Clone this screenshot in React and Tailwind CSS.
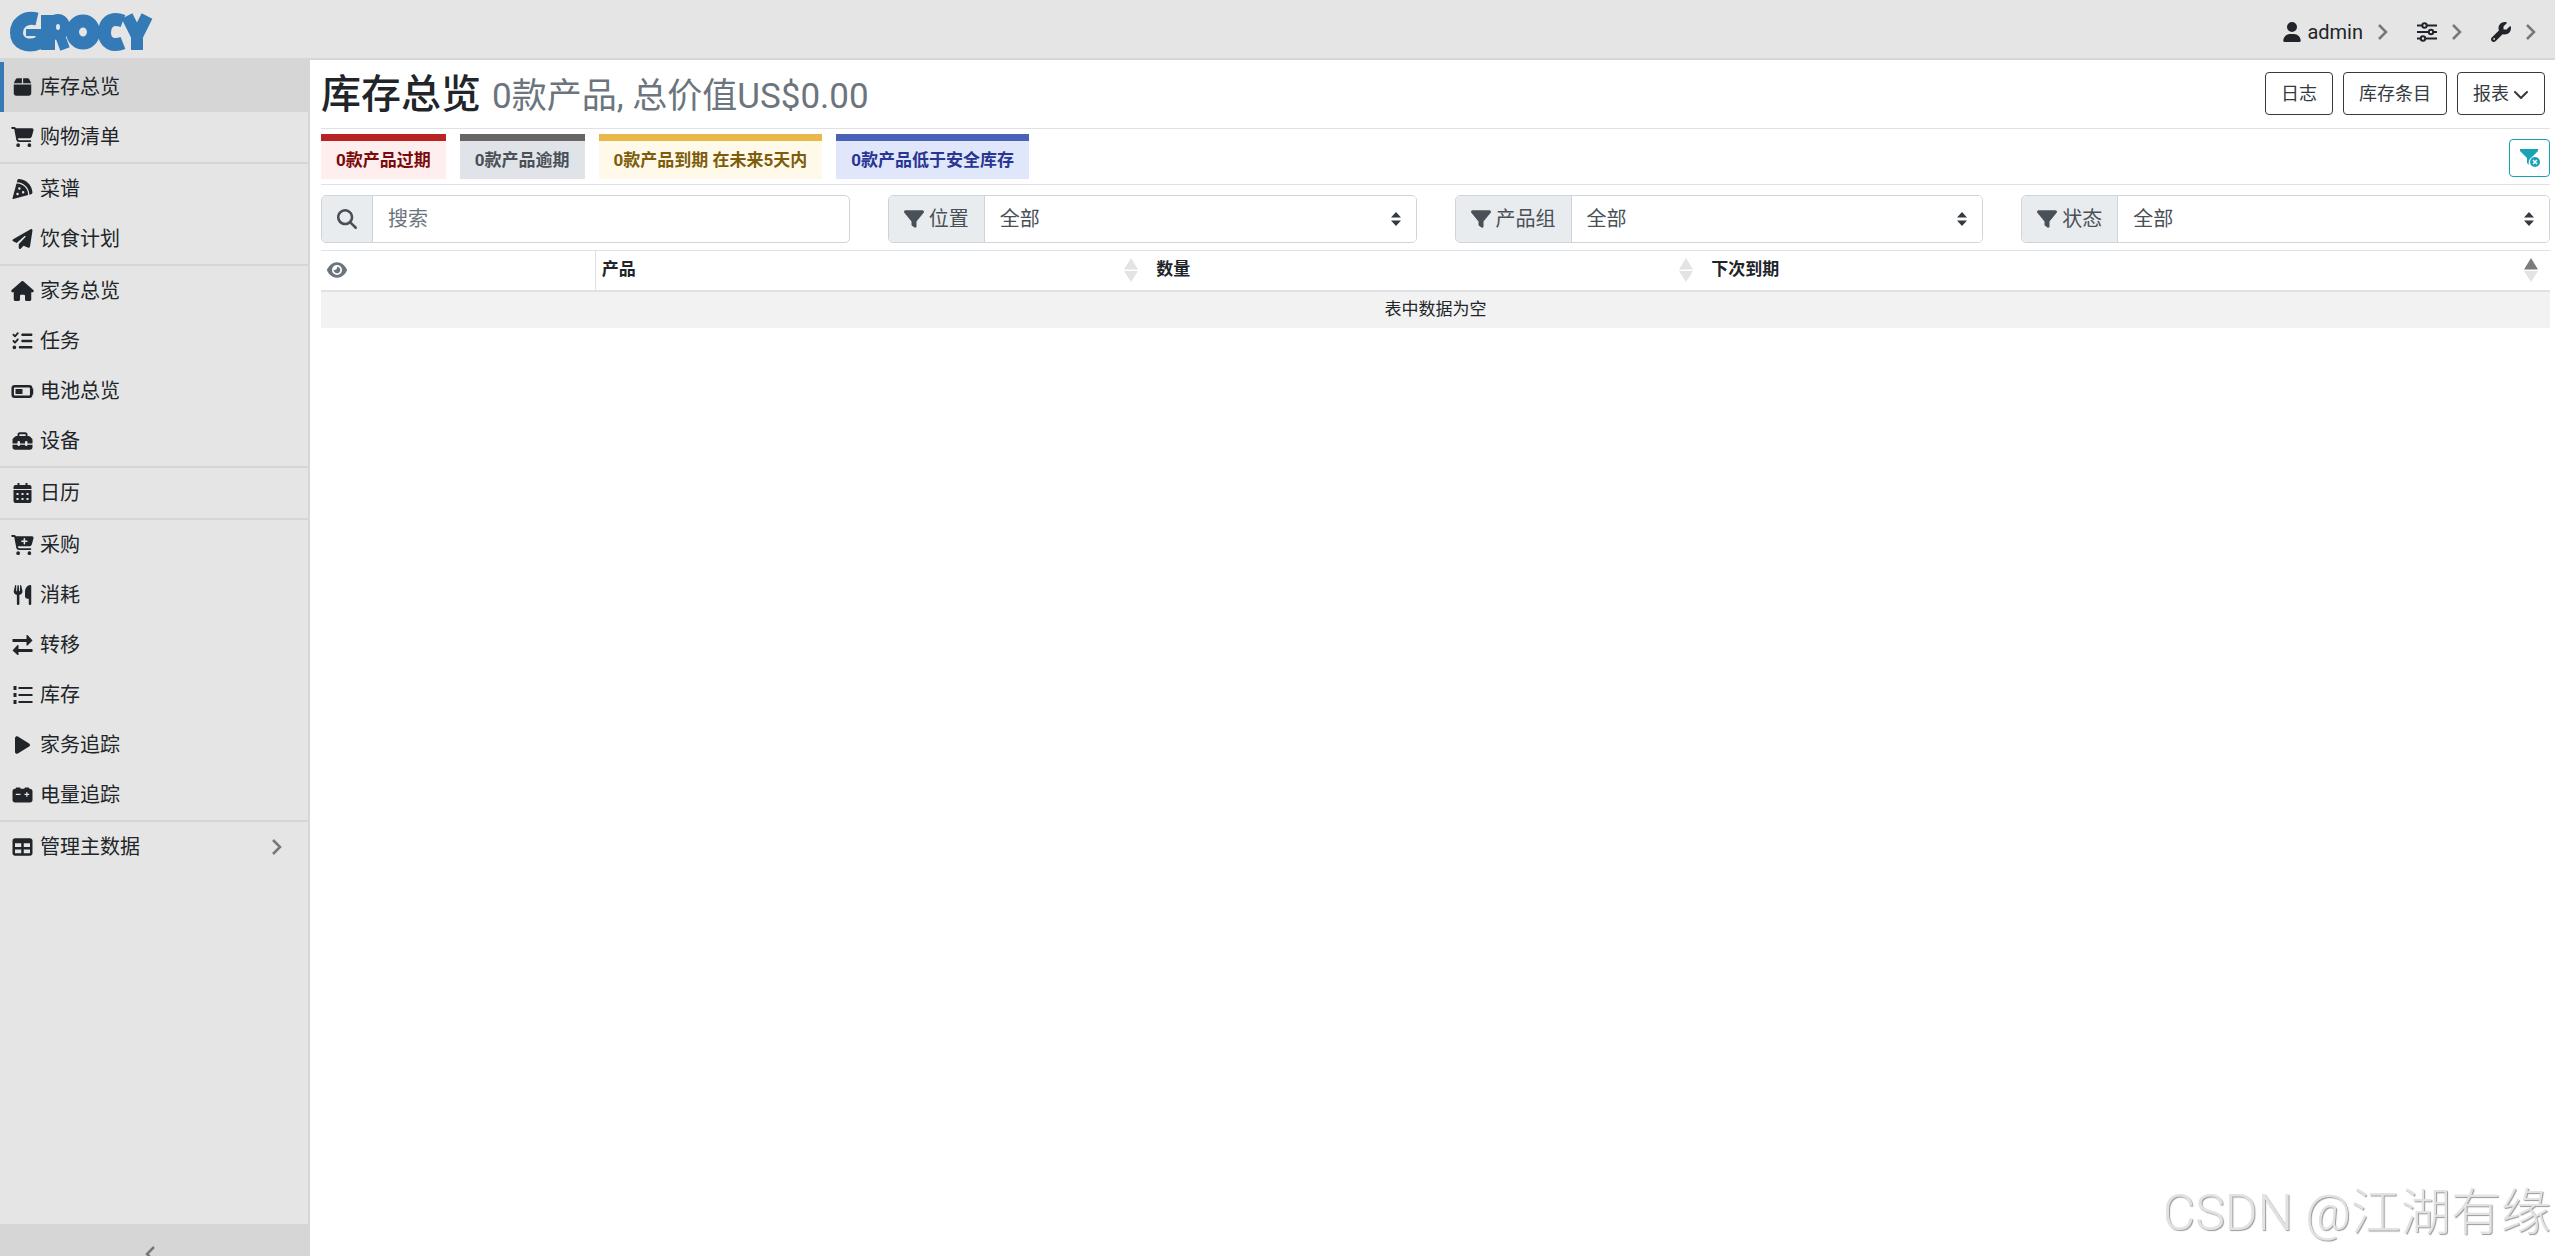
import React, { useState } from 'react';
import {
  FaBox, FaCartShopping, FaPizzaSlice, FaPaperPlane, FaHouse, FaListCheck, FaToolbox,
  FaCartPlus, FaUtensils, FaPlay, FaCarBattery, FaTable, FaUser, FaWrench,
  FaMagnifyingGlass, FaFilter, FaEye, FaChevronDown,
} from 'react-icons/fa6';

const MENU = [
  [
    { label: '库存总览', icon: FaBox, active: true },
    { label: '购物清单', icon: FaCartShopping },
  ],
  [
    { label: '菜谱', icon: FaPizzaSlice },
    { label: '饮食计划', icon: FaPaperPlane },
  ],
  [
    { label: '家务总览', icon: FaHouse },
    { label: '任务', icon: FaListCheck },
    { label: '电池总览', icon: BatteryIcon },
    { label: '设备', icon: FaToolbox },
  ],
  [{ label: '日历', icon: CalendarIcon }],
  [
    { label: '采购', icon: FaCartPlus },
    { label: '消耗', icon: FaUtensils },
    { label: '转移', icon: ArrowsIcon },
    { label: '库存', icon: ListIcon },
    { label: '家务追踪', icon: FaPlay },
    { label: '电量追踪', icon: FaCarBattery },
  ],
  [{ label: '管理主数据', icon: FaTable, expandable: true }],
];

const PILLS = [
  { label: '0款产品过期', style: 'border-[#b82323] bg-[#ffeeee] text-[#7a0a0a]' },
  { label: '0款产品逾期', style: 'border-[#666666] bg-[#e0e3e8] text-[#4a5058]' },
  { label: '0款产品到期 在未来5天内', style: 'border-[#e8b84a] bg-[#fff9ea] text-[#7d5d0b]' },
  { label: '0款产品低于安全库存', style: 'border-[#4b61b8] bg-[#e0e7fa] text-[#283593]' },
];

const FILTERS = [
  { id: 'location', label: '位置' },
  { id: 'product-group', label: '产品组' },
  { id: 'status', label: '状态' },
];

function Logo() {
  return (
    <svg width="144" height="42" viewBox="0 0 144 42" role="img" aria-label="GROCY" fill="none" stroke="#337ab7">
      <path d="M27 8 C14 5 6.500 13 6.500 21.500 C6.500 32 17 37 29 32" strokeWidth="13" />
      <path d="M16 21.500 H33" strokeWidth="7" />
      <path d="M30 18 V38" strokeWidth="9" />
      <path d="M38 4 V39" strokeWidth="14" />
      <ellipse cx="48" cy="16" rx="7" ry="8" strokeWidth="10" />
      <path d="M49 22 L55 38" strokeWidth="10" />
      <ellipse cx="73" cy="21" rx="10.500" ry="11" strokeWidth="13" />
      <path d="M113 10 C100 5 94.500 13 94.500 21.500 C94.500 32 103 36 113 32" strokeWidth="13" />
      <path d="M117 5 L127 25" strokeWidth="12" />
      <path d="M137 5 L127 25" strokeWidth="12" />
      <path d="M127 20 V39" strokeWidth="12" />
    </svg>
  );
}

function BatteryIcon({ className }) {
  return (
    <svg viewBox="0 0 22 20" className={className} fill="none" stroke="currentColor">
      <rect x="1.200" y="5.200" width="18.500" height="10.500" rx="2" strokeWidth="2.500" />
      <path d="M20.500 7.500 V13.500" strokeWidth="2.500" />
      <path d="M4 10.500 H11" strokeWidth="5" />
    </svg>
  );
}

function CalendarIcon({ className }) {
  return (
    <svg viewBox="0 0 20 20" className={className} fill="currentColor" fillRule="evenodd">
      <path d="M5 0h2v2h6V0h2v2h2a2 2 0 0 1 2 2v2H1V4a2 2 0 0 1 2-2h2zM1 7h18v11a2 2 0 0 1-2 2H3a2 2 0 0 1-2-2zM4 10v2h2v-2zM9 10v2h2v-2zM14 10v2h2v-2zM4 15v2h2v-2zM9 15v2h2v-2zM14 15v2h2v-2z" />
    </svg>
  );
}

function ArrowsIcon({ className }) {
  return (
    <svg viewBox="0 0 20 20" className={className} fill="currentColor">
      <path d="M0 4h14V0h1l5 5.500-5 5h-1V7H0zM20 14H6v-4H5l-5 5.500L5 20h1v-3h14z" />
    </svg>
  );
}

function ListIcon({ className }) {
  return (
    <svg viewBox="0 0 20 20" className={className} fill="currentColor">
      <path d="M1 1h3v4H1zM1 8h3v4H1zM1 15h3v4H1zM6 2h14v2H6zM6 9h14v2H6zM6 16h14v2H6z" />
    </svg>
  );
}

function SlidersIcon() {
  return (
    <svg width="20" height="20" viewBox="0 0 20 20" fill="#e5e5e5" stroke="#212529" strokeWidth="2">
      <path d="M0 3.500 H20 M0 10 H20 M0 16.500 H20" />
      <circle cx="7.500" cy="3.500" r="2.200" />
      <circle cx="14" cy="10" r="2.200" />
      <circle cx="6" cy="16.500" r="2.200" />
    </svg>
  );
}

function Angle({ className, left }) {
  return (
    <svg width="10" height="16" viewBox="0 0 10 16" fill="none" stroke="#777" strokeWidth="2.500" className={className}>
      <path d={left ? 'M9 1 L2 8 L9 15' : 'M1 1 L8 8 L1 15'} />
    </svg>
  );
}

function FilterClearIcon() {
  return (
    <svg width="22" height="20" viewBox="0 0 22 20" fill="#17a2b8">
      <path d="M1 1h18v2l-6 6a6.500 6.500 0 0 0-3 8l-2-2v-5L1 3z" />
      <circle cx="16" cy="14" r="5" />
      <path d="M14 12l4 4M18 12l-4 4" stroke="#fff" strokeWidth="1.500" />
    </svg>
  );
}

function SortArrows({ asc }) {
  return (
    <svg width="14" height="24" viewBox="0 0 14 24" className="shrink-0">
      <path d="M7 0 L14 11.500 H0z" fill={asc ? '#7a7c7f' : '#e2e3e3'} />
      <path d="M0 13 H14 L7 24z" fill="#e2e3e3" />
    </svg>
  );
}

function MenuItem({ item }) {
  const Icon = item.icon;
  return (
    <li>
      <a
        href="#"
        className={`flex items-center h-[50px] pl-[7px] pr-[26px] border-l-4 ${item.active ? 'border-[#337ab7] bg-[#d6d6d6]' : 'border-transparent'}`}
      >
        <Icon className="w-[23px] h-5 mr-1.5" />
        {item.label}
        {item.expandable && <Angle className="ml-auto" />}
      </a>
    </li>
  );
}

function Sidebar() {
  return (
    <nav className="w-[310px] shrink-0 flex flex-col bg-[#e5e5e5] border-r-2 border-[#d6d6d6]">
      {MENU.map((group) => (
        <ul key={group[0].label} className="border-t-2 border-[#d6d6d6]">
          {group.map((item) => <MenuItem key={item.label} item={item} />)}
        </ul>
      ))}
      <button type="button" aria-label="Collapse" className="mt-auto h-8 pt-[22px] pr-2 flex items-start justify-center overflow-hidden bg-[#d6d6d6]">
        <Angle left className="shrink-0" />
      </button>
    </nav>
  );
}

function Header() {
  return (
    <header className="h-[60px] shrink-0 flex items-center justify-between bg-[#e5e5e5] border-b-2 border-[#d6d6d6] pl-2.5 pr-[19px]">
      <a href="#" className="pt-1.5"><Logo /></a>
      <div className="flex items-center gap-[29px] pt-1.5">
        <button type="button" className="flex items-center">
          <FaUser className="size-5 mr-[5px]" />admin<Angle className="ml-[15px]" />
        </button>
        <button type="button" aria-label="Settings" className="flex items-center gap-[15px]">
          <SlidersIcon /><Angle />
        </button>
        <button type="button" aria-label="Tools" className="flex items-center gap-[15px]">
          <FaWrench className="size-5" /><Angle />
        </button>
      </div>
    </header>
  );
}

function OutlineButton({ children }) {
  return (
    <button type="button" className="h-[43px] px-[15px] flex items-center gap-1 border border-[#343a40] rounded text-lg text-[#343a40]">
      {children}
    </button>
  );
}

function FilterSelect({ id, label }) {
  return (
    <div className="flex h-12 border border-[#ced4da] rounded-[5px] text-[#495057] overflow-hidden">
      <label htmlFor={id} className="flex items-center gap-[5px] px-[15px] bg-[#e9ecef] border-r border-[#ced4da] whitespace-nowrap">
        <FaFilter className="size-5" />{label}
      </label>
      <div className="relative flex-1">
        <select id={id} className="w-full h-full pl-[15px] pr-10 appearance-none outline-none bg-white">
          <option>全部</option>
        </select>
        <svg width="10" height="14" viewBox="0 0 10 14" fill="#343a40" className="absolute right-[15px] top-1/2 -translate-y-1/2 pointer-events-none">
          <path d="M0 5.500 L5 0 L10 5.500zM0 8.500 H10 L5 14z" />
        </svg>
      </div>
    </div>
  );
}

export default function App() {
  const [search, setSearch] = useState('');

  return (
    <div className="min-h-screen flex flex-col bg-white text-xl text-[#212529] font-[Roboto,'Noto_Sans_CJK_SC',sans-serif]">
      <Header />
      <div className="flex-1 flex">
        <Sidebar />

        <main className="relative flex-1 min-w-0 pl-[11px] pr-[5px]">
          {/* TITLE */}
          <div className="h-[69px] flex items-start justify-between border-b border-[#dee2e6]">
            <h1 className="flex items-baseline gap-[11px] pt-[11px] text-[40px] leading-[48px] font-medium">
              库存总览
              <small className="text-[35px] font-normal text-[#6c757d]">0款产品, 总价值US$0.00</small>
            </h1>
            <div className="flex gap-2.5 pt-3 pr-[5px]">
              <OutlineButton>日志</OutlineButton>
              <OutlineButton>库存条目</OutlineButton>
              <OutlineButton>报表<FaChevronDown className="size-4" /></OutlineButton>
            </div>
          </div>

          {/* STATUS PILLS */}
          <div className="h-14 flex items-start justify-between border-b border-[#dee2e6]">
            <div className="flex gap-3.5 pt-[5px]">
              {PILLS.map((pill) => (
                <button type="button" key={pill.label} className={`h-[45px] px-[15px] pt-0.5 border-t-[7px] text-[17px] font-bold ${pill.style}`}>
                  {pill.label}
                </button>
              ))}
            </div>
            <button type="button" aria-label="Clear filter" className="mt-2.5 w-[41px] h-[38px] flex items-center justify-center border border-[#17a2b8] rounded">
              <FilterClearIcon />
            </button>
          </div>

          {/* FILTERS */}
          <div className="grid grid-cols-4 gap-[38px] pt-2.5 pb-[7px]">
            <div className="flex h-12 border border-[#ced4da] rounded-[5px] overflow-hidden">
              <label htmlFor="search" aria-label="搜索" className="w-[51px] flex items-center justify-center bg-[#e9ecef] border-r border-[#ced4da] text-[#495057]">
                <FaMagnifyingGlass className="size-5" />
              </label>
              <input
                id="search" type="text" value={search} onChange={(e) => setSearch(e.target.value)} placeholder="搜索"
                className="flex-1 min-w-0 px-[15px] outline-none placeholder:text-[#6c757d]"
              />
            </div>
            {FILTERS.map((filter) => <FilterSelect key={filter.id} {...filter} />)}
          </div>

          {/* STOCK TABLE */}
          <table className="w-full table-fixed border-collapse text-[17px]">
            <thead>
              <tr className="h-10 border-t border-b-2 border-[#dee2e6] text-left">
                <th className="w-[12.3%] px-1.5 border-r border-[#dee2e6]">
                  <button type="button" aria-label="Columns" className="flex text-[#6c757d]"><FaEye className="size-5" /></button>
                </th>
                <th className="w-[24.9%] pl-1.5 pr-3"><div className="flex items-center justify-between">产品<SortArrows /></div></th>
                <th className="w-[24.9%] pl-1.5 pr-3"><div className="flex items-center justify-between">数量<SortArrows /></div></th>
                <th className="pl-1.5 pr-3"><div className="flex items-center justify-between">下次到期<SortArrows asc /></div></th>
              </tr>
            </thead>
            <tbody>
              <tr className="h-[37px] bg-[#f2f2f2]">
                <td colSpan={4} className="text-center">表中数据为空</td>
              </tr>
            </tbody>
          </table>

          <div className="absolute right-1 bottom-2 text-[50px] leading-[70px] font-light text-[#e2e2e2] [text-shadow:1px_1px_1px_#999]">
            CSDN @江湖有缘
          </div>
        </main>
      </div>
    </div>
  );
}
